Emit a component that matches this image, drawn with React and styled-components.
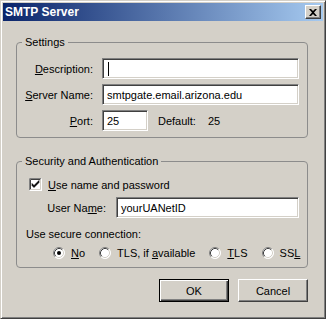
import styled, { createGlobalStyle } from "styled-components";

const GlobalStyle = createGlobalStyle`
  html, body { margin: 0; padding: 0; background: #d4d0c8; }
  body {
    font-family: "Liberation Sans", Arial, sans-serif;
    font-size: 11px;
    color: #000;
  }
`;

const Window = styled.div`
  width: 326px;
  height: 319px;
  box-sizing: border-box;
  background: #d4d0c8;
  border: 1px solid;
  border-color: #d4d0c8 #404040 #404040 #d4d0c8;
  box-shadow: inset 1px 1px #fff, inset -1px -1px #808080;
  padding: 2px;
  display: flex;
  flex-direction: column;
`;

const TitleBar = styled.div`
  height: 18px;
  display: flex;
  align-items: center;
  justify-content: space-between;
  padding: 0 2px;
  background: linear-gradient(to right, #0a246a, #a6caf0);
  color: #fff;
  font-weight: bold;
  font-size: 12px;
`;

const CloseButton = styled.div`
  width: 16px;
  height: 14px;
  box-sizing: border-box;
  background: #d4d0c8;
  border: 1px solid;
  border-color: #fff #404040 #404040 #fff;
  box-shadow: inset -1px -1px #808080;
  display: flex;
  align-items: center;
  justify-content: center;
`;

const Content = styled.div`
  padding: 15px 0 0 13px;
  display: flex;
  flex-direction: column;
`;

const Group = styled.fieldset`
  margin: ${(p) => p.$top || 0}px 0 0 0;
  padding: 0;
  width: 292px;
  box-sizing: border-box;
  border: 1px solid #8c8c8c;
  border-radius: 4px;
  min-width: 0;
`;

const Legend = styled.legend`
  margin-left: 5px;
  padding: 0 3px;
  line-height: 13px;
`;

const FormGrid = styled.div`
  display: grid;
  grid-template-columns: 76px 197px;
  column-gap: 9px;
  row-gap: 5px;
  padding: 9px 0 6px;
  align-items: center;
`;

const Label = styled.label`
  text-align: right;
  width: ${(p) => (p.$width ? `${p.$width}px` : "auto")};
  margin-right: ${(p) => p.$gap || 0}px;
`;

const Field = styled.div`
  width: ${(p) => (p.$width ? `${p.$width}px` : "100%")};
  height: 21px;
  box-sizing: border-box;
  background: #fff;
  border: 1px solid;
  border-color: #808080 #fff #fff #808080;
  box-shadow: inset 1px 1px #404040, inset -1px -1px #d4d0c8;
  padding: 0 4px;
  display: flex;
  align-items: center;
  white-space: nowrap;
`;

const Caret = styled.span`
  display: inline-block;
  width: 1px;
  height: 14px;
  background: #000;
  margin-left: 1px;
`;

const PortRow = styled.div`
  display: flex;
  align-items: center;
`;

const DefaultText = styled.span`
  margin-left: 10px;
  width: 50px;
`;

const SecurityBody = styled.div`
  padding: 10px 0 8px;
  display: flex;
  flex-direction: column;
`;

const CheckRow = styled.div`
  display: flex;
  align-items: center;
  gap: 6px;
  padding-left: 12px;
  height: 13px;
`;

const Row = styled.div`
  display: flex;
  align-items: center;
  margin-top: ${(p) => p.$top || 0}px;
  padding-left: ${(p) => p.$left || 0}px;
`;

const RadioRow = styled.div`
  display: flex;
  align-items: center;
  gap: 14px;
  padding-left: 36px;
  margin-top: 6px;
  height: 13px;
`;

const RadioOption = styled.span`
  display: flex;
  align-items: center;
  gap: 6px;
`;

const Buttons = styled.div`
  display: flex;
  justify-content: flex-end;
  gap: 9px;
  width: 292px;
  margin-top: 11px;
`;

const Button = styled.div`
  width: 70px;
  height: 23px;
  box-sizing: border-box;
  display: flex;
  align-items: center;
  justify-content: center;
  background: #d4d0c8;
  border: 1px solid;
  border-color: ${(p) => (p.$default ? "#000" : "#fff #404040 #404040 #fff")};
  box-shadow: ${(p) =>
    p.$default
      ? "inset 1px 1px #fff, inset -1px -1px #404040, inset -2px -2px #808080"
      : "inset -1px -1px #808080"};
`;

const CheckBox = ({ checked }) => (
  <svg width="13" height="13" viewBox="0 0 13 13">
    <rect x="0" y="0" width="13" height="13" fill="#fff" />
    <path d="M0.5 12.5V0.5H12.5" stroke="#808080" fill="none" />
    <path d="M1.5 11.5V1.5H11.5" stroke="#404040" fill="none" />
    <path d="M1.5 11.5H11.5V1.5" stroke="#d4d0c8" fill="none" />
    <path d="M0.5 12.5H12.5V0.5" stroke="#fff" fill="none" />
    {checked && (
      <path d="M3 5.5L5 7.5L10 2.5V4.5L5 9.5L3 7.5Z" fill="#000" stroke="#000" strokeWidth="0.6" />
    )}
  </svg>
);

const Radio = ({ checked }) => (
  <svg width="12" height="12" viewBox="0 0 12 12">
    <circle cx="6" cy="6" r="5.5" fill="#fff" />
    <path d="M2.11 9.89A5.5 5.5 0 0 1 9.89 2.11" stroke="#808080" fill="none" />
    <path d="M2.11 9.89A5.5 5.5 0 0 0 9.89 2.11" stroke="#fff" fill="none" />
    <path d="M2.82 9.18A4.5 4.5 0 0 1 9.18 2.82" stroke="#404040" fill="none" />
    <path d="M2.82 9.18A4.5 4.5 0 0 0 9.18 2.82" stroke="#d4d0c8" fill="none" />
    {checked && <circle cx="6" cy="6" r="2" fill="#000" />}
  </svg>
);

const CloseIcon = () => (
  <svg width="8" height="7" viewBox="0 0 8 7">
    <path d="M0 0H2L4 2L6 0H8L5 3.5L8 7H6L4 5L2 7H0L3 3.5Z" fill="#000" />
  </svg>
);

export default function App() {
  return (
    <>
      <GlobalStyle />
      <Window>
        <TitleBar>
          <span>SMTP Server</span>
          <CloseButton>
            <CloseIcon />
          </CloseButton>
        </TitleBar>
        <Content>
          <Group>
            <Legend>Settings</Legend>
            <FormGrid>
              <Label>
                <u>D</u>escription:
              </Label>
              <Field>
                <Caret />
              </Field>
              <Label>
                <u>S</u>erver Name:
              </Label>
              <Field>smtpgate.email.arizona.edu</Field>
              <Label>
                <u>P</u>ort:
              </Label>
              <PortRow>
                <Field $width={46}>25</Field>
                <DefaultText>Default:</DefaultText>
                <span>25</span>
              </PortRow>
            </FormGrid>
          </Group>

          <Group $top={17}>
            <Legend>Security and Authentication</Legend>
            <SecurityBody>
              <CheckRow>
                <CheckBox checked />
                <span>
                  <u>U</u>se name and password
                </span>
              </CheckRow>
              <Row $top={6}>
                <Label $width={89} $gap={10}>
                  User Na<u>m</u>e:
                </Label>
                <Field $width={183}>yourUANetID</Field>
              </Row>
              <Row $top={10} $left={9}>
                Use secure connection:
              </Row>
              <RadioRow>
                <RadioOption>
                  <Radio checked />
                  <span>
                    <u>N</u>o
                  </span>
                </RadioOption>
                <RadioOption>
                  <Radio />
                  <span>
                    TLS, if <u>a</u>vailable
                  </span>
                </RadioOption>
                <RadioOption>
                  <Radio />
                  <span>
                    <u>T</u>LS
                  </span>
                </RadioOption>
                <RadioOption>
                  <Radio />
                  <span>
                    SS<u>L</u>
                  </span>
                </RadioOption>
              </RadioRow>
            </SecurityBody>
          </Group>

          <Buttons>
            <Button $default>OK</Button>
            <Button>Cancel</Button>
          </Buttons>
        </Content>
      </Window>
    </>
  );
}
